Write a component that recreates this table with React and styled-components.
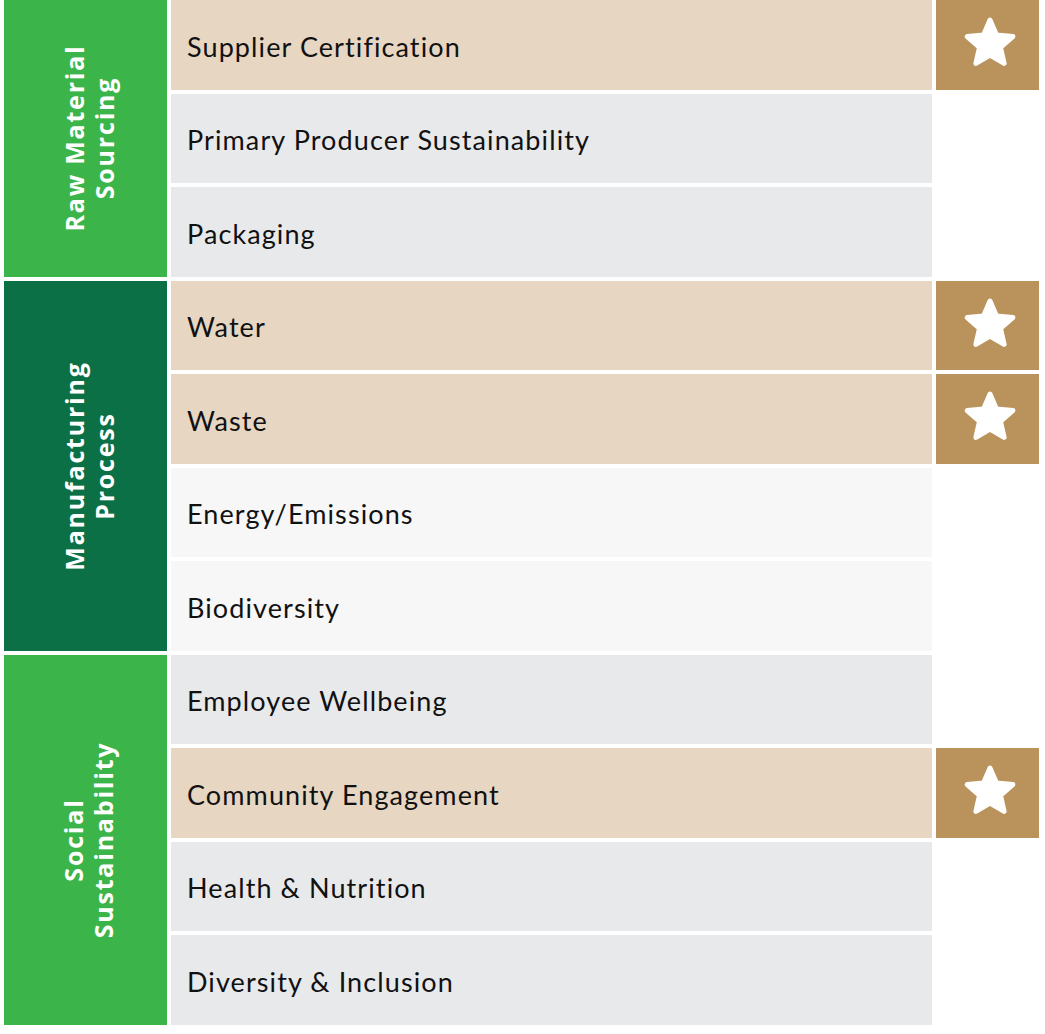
import React from 'react';
import styled, { createGlobalStyle } from 'styled-components';

const GlobalStyle = createGlobalStyle`
  body {
    margin: 0;
    background: #ffffff;
    font-family: 'Lato', 'Noto Sans', sans-serif;
  }
`;

const Board = styled.div`
  display: flex;
  flex-direction: column;
  gap: 4px;
  padding-left: 4px;
  width: 1035px;
`;

const Section = styled.div`
  display: grid;
  grid-template-columns: 163px 1fr;
  gap: 4px;
`;

const Category = styled.div`
  background: ${(p) => p.color};
  display: flex;
  align-items: center;
  justify-content: center;
  overflow: hidden;
`;

const CategoryLabel = styled.div`
  transform: rotate(-90deg);
  white-space: nowrap;
  color: #ffffff;
  font-family: 'Open Sans', 'Noto Sans', sans-serif;
  font-weight: 700;
  font-size: 25px;
  line-height: 30px;
  letter-spacing: 1.8px;
  text-align: center;
  margin-left: 6px;
`;

const Rows = styled.div`
  display: flex;
  flex-direction: column;
  gap: 4px;
`;

const Row = styled.div`
  display: grid;
  grid-template-columns: 761px 103px;
  gap: 4px;
  height: 89.5px;
`;

const Label = styled.div`
  background: ${(p) => p.tone};
  display: flex;
  align-items: center;
  padding: 3px 0 0 16px;
  font-size: 27px;
  letter-spacing: 1.1px;
  color: #111111;
`;

const StarCell = styled.div`
  background: #ba935c;
  display: flex;
  align-items: center;
  justify-content: center;
  padding: 0 0 3px 4px;
`;

const tones = {
  beige: '#e7d6c1',
  gray: '#e8e9eb',
  light: '#f6f7f6',
};

const sections = [
  {
    title: ['Raw Material', 'Sourcing'],
    color: '#3bb54a',
    items: [
      { name: 'Supplier Certification', tone: 'beige', star: true },
      { name: 'Primary Producer Sustainability', tone: 'gray' },
      { name: 'Packaging', tone: 'gray' },
    ],
  },
  {
    title: ['Manufacturing', 'Process'],
    color: '#0b7045',
    items: [
      { name: 'Water', tone: 'beige', star: true },
      { name: 'Waste', tone: 'beige', star: true },
      { name: 'Energy/Emissions', tone: 'light' },
      { name: 'Biodiversity', tone: 'light' },
    ],
  },
  {
    title: ['Social', 'Sustainability'],
    color: '#3bb54a',
    items: [
      { name: 'Employee Wellbeing', tone: 'gray' },
      { name: 'Community Engagement', tone: 'beige', star: true },
      { name: 'Health & Nutrition', tone: 'gray' },
      { name: 'Diversity & Inclusion', tone: 'gray' },
    ],
  },
];

const Star = () => (
  <svg width="60" height="60" viewBox="0 0 60 60">
    <polygon
      points="30,7 36.47,22.1 52.83,23.58 40.46,34.4 44.11,50.42 30,42 15.89,50.42 19.54,34.4 7.17,23.58 23.53,22.1"
      fill="#ffffff"
      stroke="#ffffff"
      strokeWidth="5"
      strokeLinejoin="round"
    />
  </svg>
);

export default function App() {
  return (
    <>
      <GlobalStyle />
      <Board>
        {sections.map((s) => (
          <Section key={s.title.join(' ')}>
            <Category color={s.color}>
              <CategoryLabel>
                {s.title[0]}
                <br />
                {s.title[1]}
              </CategoryLabel>
            </Category>
            <Rows>
              {s.items.map((item) => (
                <Row key={item.name}>
                  <Label tone={tones[item.tone]}>{item.name}</Label>
                  {item.star ? (
                    <StarCell>
                      <Star />
                    </StarCell>
                  ) : (
                    <div />
                  )}
                </Row>
              ))}
            </Rows>
          </Section>
        ))}
      </Board>
    </>
  );
}
